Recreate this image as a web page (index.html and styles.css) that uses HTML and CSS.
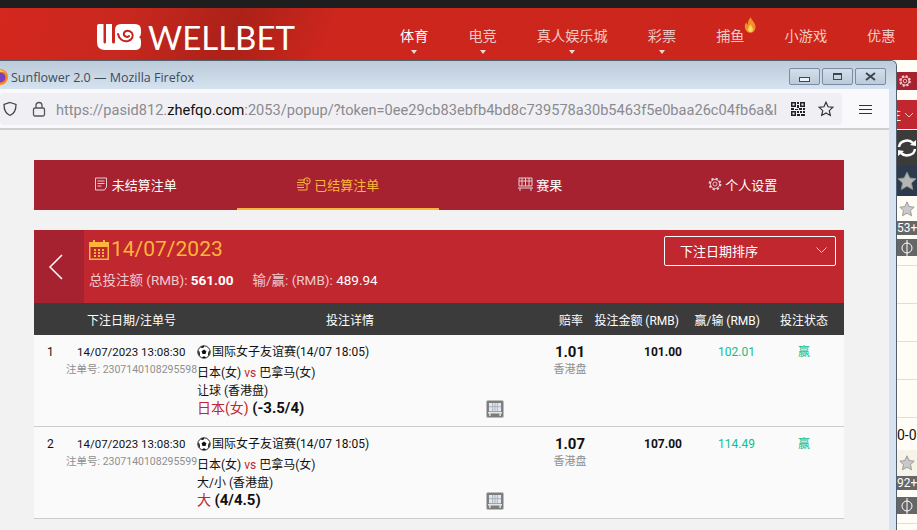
FILE: index.html
```html
<!DOCTYPE html>
<html lang="en">
<head>
    <meta charset="UTF-8">
    <title>Sunflower 2.0</title>
    <link rel="stylesheet" href="styles.css">
</head>
<body>
    <div class="top-strip"></div>
    <header class="site-header">
        <div class="logo">
            <svg class="logo-mark" width="44" height="26" viewBox="0 0 44 26">
                <path fill="#fff" d="M0 2q0-2 2-2h4.500v18q0 1.500 1.250 1.500T9 18V0h6v18q0 1.500 1.500 1.500T18 18V6q0-6 6-6h14q6 0 6 6v3q0 3-2 4 2 1 2 4v3q0 6-6 6H8q-8 0-8-8z"/>
                <path fill="none" stroke="#c4261f" stroke-width="2" stroke-linecap="round" d="M21 10c1 5 5 8 10 7 4-1 6-5 4-8-2-3-7-3-8 0-1 3 3 5 5 3"/>
            </svg>
            <span class="logo-name">WELLBET</span>
        </div>
        <nav class="site-nav">
            <a class="nav-item nav-active nav-drop">体育</a>
            <a class="nav-item nav-drop">电竞</a>
            <a class="nav-item nav-drop">真人娱乐城</a>
            <a class="nav-item nav-drop">彩票</a>
            <a class="nav-item">捕鱼
                <svg class="flame" width="13" height="18" viewBox="0 0 16 19">
                    <path fill="#f0902a" d="M8 0c1 3 5 6 6 10 1 5-2 9-6 9s-7-3-7-8c0-2 1-4 2-5 0 2 1 3 2 3C4 6 6 3 8 0z"/>
                    <path fill="#fbd45e" d="M8 8c0 2 3 4 3 7 0 2-1 3-3 3s-3-1-3-3c0-3 3-4 3-7z"/>
                </svg>
            </a>
            <a class="nav-item">小游戏</a>
            <a class="nav-item">优惠</a>
        </nav>
    </header>

    <aside class="side-strip">
        <div class="side-gear">
            <svg width="14" height="14" viewBox="0 0 24 24"><circle cx="12" cy="12" r="8" fill="none" stroke="#f6c9cd" stroke-width="4" stroke-dasharray="3.500 2.800"/><circle cx="12" cy="12" r="7" fill="none" stroke="#f6c9cd" stroke-width="1.500"/><circle cx="12" cy="12" r="3" fill="none" stroke="#f6c9cd" stroke-width="1.500"/></svg>
        </div>
        <div class="side-select"><span class="side-select-text">注</span><svg width="10" height="6" viewBox="0 0 10 6"><path d="M1 1l4 4 4-4" fill="none" stroke="#f3c6ca" stroke-width="1"/></svg></div>
        <div class="side-refresh">
            <svg width="20" height="20" viewBox="0 0 20 20"><path d="M2 9a8 7 0 0 1 14-4" fill="none" stroke="#fff" stroke-width="2.500"/><path d="M18 11a8 7 0 0 1-14 4" fill="none" stroke="#fff" stroke-width="2.500"/><path d="M13 7l6 1V2zM7 13l-6-1v6z" fill="#fff"/></svg>
        </div>
        <div class="side-fav"><svg width="20" height="20" viewBox="0 0 20 20"><path class="star-fill" d="M10 1l2.800 6 6.200.700-4.600 4.300 1.300 6.500L10 15.300 4.300 18.500 5.600 12 1 7.700 7.200 7z"/></svg></div>
        <div class="side-star"><svg width="16" height="16" viewBox="0 0 20 20"><path class="star-line" d="M10 1l2.800 6 6.200.700-4.600 4.300 1.300 6.500L10 15.300 4.300 18.500 5.600 12 1 7.700 7.200 7z"/></svg></div>
        <div class="side-min">53+</div>
        <div class="side-pitch"><svg width="12" height="16" viewBox="0 0 12 16"><circle cx="6" cy="8" r="5" fill="none" stroke="#fff"/><path d="M6 0v16" stroke="#fff"/></svg></div>
        <div class="side-line side-line-first"></div>
        <div class="side-line"></div>
        <div class="side-line"></div>
        <div class="side-line"></div>
        <div class="side-line"></div>
        <div class="side-score">0-0</div>
        <div class="side-star side-star-low"><svg width="16" height="16" viewBox="0 0 20 20"><path class="star-line" d="M10 1l2.800 6 6.200.700-4.600 4.300 1.300 6.500L10 15.300 4.300 18.500 5.600 12 1 7.700 7.200 7z"/></svg></div>
        <div class="side-min">92+</div>
        <div class="side-pitch side-pitch-low"><svg width="12" height="16" viewBox="0 0 12 16"><circle cx="6" cy="8" r="5" fill="none" stroke="#fff"/><path d="M6 0v16" stroke="#fff"/></svg></div>
        <div class="side-line side-line-first"></div>
    </aside>

    <div class="popup">
        <div class="title-bar">
            <svg class="ff-icon" width="16" height="16" viewBox="0 0 16 16"><circle cx="8" cy="8" r="8" fill="#f78a1e"/><circle cx="8.500" cy="8.500" r="5" fill="#7b3fc4"/><path d="M3 2q5-3 10 1-5-1-6 1-3 1-4-2z" fill="#ffcb3c"/></svg>
            <span class="title-text">Sunflower 2.0 — Mozilla Firefox</span>
            <div class="win-buttons">
                <span class="win-btn"><i class="win-min"></i></span>
                <span class="win-btn"><i class="win-max"></i></span>
                <span class="win-btn">
                    <svg width="11" height="9" viewBox="0 0 11 9"><path d="M1 1l9 7M10 1l-9 7" stroke="#3c4654" stroke-width="2" fill="none"/></svg>
                </span>
            </div>
        </div>
        <div class="tool-bar">
            <div class="url-bar">
                <svg class="url-icon" width="16" height="16" viewBox="0 0 16 16"><path d="M8 1.500l6 2c0 5-1 9-6 11-5-2-6-6-6-11z" fill="none" stroke="#444" stroke-width="1.300"/></svg>
                <svg class="url-lock" width="14" height="16" viewBox="0 0 14 16"><rect x="1.500" y="7" width="11" height="8" rx="1.500" fill="none" stroke="#555" stroke-width="1.300"/><path d="M4 7V4.500a3 3 0 0 1 6 0V7" fill="none" stroke="#555" stroke-width="1.300"/></svg>
                <div class="url-text">https://pasid812.<b>zhefqo.com</b>:2053/popup/?token=0ee29cb83ebfb4bd8c739578a30b5463f5e0baa26c04fb6a&amp;l</div>
                <svg class="url-qr" width="14" height="16" viewBox="0 0 14 16"><path fill="#222" d="M0 1h5v5H0zM9 1h5v5H9zM0 10h5v5H0zM1.500 2.500v2h2v-2zM10.500 2.500v2h2v-2zM1.500 11.500v2h2v-2zM6 1h2v2H6zM6 4h2v3H6zM0 7h3v2H0zM4 8h3v1H4zM8 7h3v2H8zM12 7h2v2h-2zM6 10h2v2H6zM9 10h2v2H9zM12 10h2v2h-2zM6 13h3v2H6zM10 13h4v2h-4z"/></svg>
                <svg class="url-star" width="16" height="16" viewBox="0 0 20 20"><path d="M10 1.500l2.600 5.700 6 .7-4.500 4.100 1.300 6L10 15l-5.400 3 1.300-6L1.400 7.900l6-.7z" fill="none" stroke="#333" stroke-width="1.500"/></svg>
            </div>
            <div class="menu-btn"><i></i><i></i><i></i></div>
        </div>

        <main class="content">
            <div class="tabs">
                <a class="tab">
                    <svg width="15" height="14" viewBox="0 0 15 14"><path d="M1.500 1h11v9l-2 3h-9zM3.500 4h7M3.500 6.500h7M3.500 9h4" fill="none" stroke="#e8ccd0"/></svg>
                    未结算注单
                </a>
                <a class="tab tab-active">
                    <svg width="15" height="14" viewBox="0 0 15 14"><path d="M2 3h7M1 5.500h7M1 8h7M1 10.500h7M2 13h9V6" fill="none" stroke="#fdb53b"/><circle cx="11" cy="4" r="3.200" fill="none" stroke="#fdb53b"/><path d="M11 2.500V4h1.500" fill="none" stroke="#fdb53b"/></svg>
                    已结算注单
                </a>
                <a class="tab">
                    <svg width="15" height="14" viewBox="0 0 15 14"><path d="M1 1h13v8H1zM4 1v8M7.500 1v8M11 1v8M1 4h13M0 11h15M2 11v3M13 11v3" fill="none" stroke="#e8ccd0"/></svg>
                    赛果
                </a>
                <a class="tab">
                    <svg width="14" height="14" viewBox="0 0 24 24"><circle cx="12" cy="12" r="9" fill="none" stroke="#e8ccd0" stroke-width="4" stroke-dasharray="3.500 3.570"/><circle cx="12" cy="12" r="8" fill="none" stroke="#e8ccd0" stroke-width="1.500"/><circle cx="12" cy="12" r="3.500" fill="none" stroke="#e8ccd0" stroke-width="1.500"/></svg>
                    个人设置
                </a>
            </div>

            <section class="date-head">
                <a class="date-back">
                    <svg width="16" height="26" viewBox="0 0 16 26"><path d="M14 1L2 13l12 12" fill="none" stroke="#fff" stroke-width="1.500"/></svg>
                </a>
                <div class="date-info">
                    <div class="date-title">
                        <svg width="20" height="21" viewBox="0 0 20 21"><path fill="#fdb53b" d="M0 3h4V1h2v2h8V1h2v2h4v18H0zM1.500 8v11.500h17V8zM5 10h2v2H5zM9 10h2v2H9zM13 10h2v2h-2zM5 13h2v2H5zM9 13h2v2H9zM13 13h2v2h-2zM5 16h2v2H5zM9 16h2v2H9zM13 16h2v2h-2z" fill-rule="evenodd"/></svg>
                        14/07/2023
                    </div>
                    <div class="date-totals">
                        <span>总投注额 (RMB): <b>561.00</b></span>
                        <span>输/赢: (RMB): <em>489.94</em></span>
                    </div>
                </div>
                <div class="sort-box">下注日期排序
                    <svg width="11" height="6" viewBox="0 0 11 6"><path d="M.5.500l5 5 5-5" fill="none" stroke="#f3c6ca"/></svg>
                </div>
            </section>

            <div class="table-head">
                <span></span>
                <span>下注日期/注单号</span>
                <span class="head-center">投注详情</span>
                <div class="head-right">
                    <span class="head-odds">赔率</span>
                    <span class="head-stake">投注金额 (RMB)</span>
                    <span class="head-win">赢/输 (RMB)</span>
                    <span class="head-status">投注状态</span>
                </div>
            </div>

            <div class="bet-row">
                <div class="bet-num">1</div>
                <div class="bet-date">
                    <div class="bet-time">14/07/2023 13:08:30</div>
                    <div class="bet-ref">注单号: 2307140108295598</div>
                </div>
                <div class="bet-detail">
                    <div class="detail-text">
                        <div class="league">
                            <svg width="14" height="14" viewBox="0 0 14 14"><circle cx="7" cy="7" r="6.200" fill="#fff" stroke="#222"/><path d="M7 4.500l2.400 1.700-.9 2.800h-3l-.9-2.800zM7 .8v1.500l-2 1-1.500-1.500zM1 6l1.500.500.500 3L2 11zM13 6l-1.500.500-.500 3L12 11zM5 13l1-1.500h2l1 1.500z" fill="#111"/></svg>
                            国际女子友谊赛(14/07 18:05)
                        </div>
                        <div class="teams">日本(女) <span class="vs">vs</span> 巴拿马(女)</div>
                        <div class="market">让球 (香港盘)</div>
                        <div class="pick"><span>日本(女)</span> <b>(-3.5/4)</b></div>
                    </div>
                    <span class="stream-btn"><svg width="14" height="13" viewBox="0 0 15 14"><path d="M1 0h13v9H1z" fill="#e4e8ee"/><path d="M5 0v9M7.500 0v9M10 0v9M1 4h13" fill="none" stroke="#a8aeb6"/><path d="M0 10.500h15M2 10v4M13 10v4" fill="none" stroke="#e6e6e6" stroke-width="1.500"/></svg></span>
                </div>
                <div class="bet-odds"><b>1.01</b><span>香港盘</span></div>
                <div class="bet-stake">101.00</div>
                <div class="bet-win">102.01</div>
                <div class="bet-status">赢</div>
            </div>

            <div class="bet-row">
                <div class="bet-num">2</div>
                <div class="bet-date">
                    <div class="bet-time">14/07/2023 13:08:30</div>
                    <div class="bet-ref">注单号: 2307140108295599</div>
                </div>
                <div class="bet-detail">
                    <div class="detail-text">
                        <div class="league">
                            <svg width="14" height="14" viewBox="0 0 14 14"><circle cx="7" cy="7" r="6.200" fill="#fff" stroke="#222"/><path d="M7 4.500l2.400 1.700-.9 2.800h-3l-.9-2.800zM7 .8v1.500l-2 1-1.500-1.500zM1 6l1.500.500.500 3L2 11zM13 6l-1.500.500-.500 3L12 11zM5 13l1-1.500h2l1 1.500z" fill="#111"/></svg>
                            国际女子友谊赛(14/07 18:05)
                        </div>
                        <div class="teams">日本(女) <span class="vs">vs</span> 巴拿马(女)</div>
                        <div class="market">大/小 (香港盘)</div>
                        <div class="pick"><span>大</span> <b>(4/4.5)</b></div>
                    </div>
                    <span class="stream-btn"><svg width="14" height="13" viewBox="0 0 15 14"><path d="M1 0h13v9H1z" fill="#e4e8ee"/><path d="M5 0v9M7.500 0v9M10 0v9M1 4h13" fill="none" stroke="#a8aeb6"/><path d="M0 10.500h15M2 10v4M13 10v4" fill="none" stroke="#e6e6e6" stroke-width="1.500"/></svg></span>
                </div>
                <div class="bet-odds"><b>1.07</b><span>香港盘</span></div>
                <div class="bet-stake">107.00</div>
                <div class="bet-win">114.49</div>
                <div class="bet-status">赢</div>
            </div>
        </main>
    </div>
</body>
</html>
```

FILE: styles.css
```css
* {
    box-sizing: border-box;
}
html, body {
    margin: 0;
    height: 530px;
    overflow: hidden;
}
body {
    font-family: Roboto, "Noto Sans CJK SC", sans-serif;
    font-size: 12px;
    background-color: #f2f2f2;
    color: #111;
    position: relative;
}
a {
    text-decoration: none;
    color: inherit;
}

/* page behind the popup */
.top-strip {
    height: 8px;
    background-color: #1e1e1e;
}
.site-header {
    height: 52px;
    display: flex;
    align-items: flex-start;
    background: linear-gradient(110deg, #d4261d 0%, #c8281f 14%, #ab2118 26%, #cc261d 36%, #cd251c 100%);
}
.logo {
    display: flex;
    flex: none;
    align-items: center;
    gap: 7px;
    margin: 16px 0 0 97px;
    width: 303px;
}
.logo-name {
    font-family: "Lato", sans-serif;
    font-size: 33px;
    line-height: 26px;
    color: #fff;
}
.site-nav {
    display: flex;
    flex: none;
}
.nav-item {
    position: relative;
    font-size: 14.200px;
    line-height: 20px;
    color: #f0c9c7;
    padding-top: 18px;
    margin-right: 40px;
    white-space: nowrap;
}
.nav-item:last-child {
    margin-right: 0;
}
.nav-active {
    color: #fff;
}
.nav-drop::after {
    content: "";
    position: absolute;
    left: 50%;
    top: 42px;
    margin-left: -3px;
    border: 3px solid transparent;
    border-top: 4px solid #f0d8d6;
    border-bottom: 0;
}
.flame {
    position: absolute;
    right: -12px;
    top: 8px;
}

/* strip of the page that shows right of the popup */
.side-strip {
    position: absolute;
    left: 897px;
    top: 60px;
    width: 20px;
    height: 470px;
    display: flex;
    flex-direction: column;
    background-color: #fffdf6;
    overflow: hidden;
}
.side-gear {
    height: 18px;
    margin-top: 12px;
    background-color: #a62230;
    display: flex;
    align-items: center;
    padding-left: 1px;
}
.side-select {
    height: 29px;
    margin-top: 10px;
    background-color: #c1272f;
    display: flex;
    align-items: center;
    gap: 3px;
    color: #fff;
    overflow: hidden;
}
.side-select-text {
    width: 4px;
    overflow: hidden;
    direction: rtl;
    flex: none;
}
.side-refresh {
    height: 36px;
    margin-top: 1px;
    background-color: #3b3b3b;
    display: flex;
    align-items: center;
    justify-content: center;
}
.side-fav {
    height: 30px;
    background-color: #2c3a4d;
    display: flex;
    align-items: center;
    justify-content: center;
}
.star-fill {
    fill: #b5b5b5;
    stroke: #8d8d8d;
}
.star-line {
    fill: #c9c9c9;
    stroke: #8d8d8d;
}
.side-star {
    height: 25px;
    flex: none;
    display: flex;
    align-items: center;
    justify-content: center;
}
.side-star-low {
    height: 26px;
    margin-top: 4px;
    background-color: #f6f3e8;
}
.side-min {
    height: 14px;
    flex: none;
    background-color: #666;
    color: #fff;
    font-size: 12px;
    line-height: 14px;
    white-space: nowrap;
}
.side-pitch {
    height: 17px;
    flex: none;
    margin-top: 4px;
    margin-bottom: 9px;
    background-color: #666;
    display: flex;
    align-items: center;
    justify-content: center;
}
.side-pitch-low {
    margin-top: 7px;
}
.side-line {
    height: 38px;
    border-bottom: 1px solid #eed8d6;
    flex: none;
}
.side-line-first {
    height: 1px;
}
.side-score {
    height: 24px;
    flex: none;
    margin-top: 4px;
    font-size: 14px;
    line-height: 26px;
    color: #111;
}

/* firefox popup window */
.popup {
    position: absolute;
    left: -8px;
    top: 60px;
    width: 905px;
    height: 470px;
    border-top: 1px solid #555f6c;
    border-right: 1px solid #555f6c;
    border-top-right-radius: 6px;
    background-color: #d6e4f2;
    padding-right: 7px;
    overflow: hidden;
}
.title-bar {
    height: 28px;
    margin-right: -7px;
    display: flex;
    align-items: center;
    padding: 4px 10px 0 0;
    background: linear-gradient(#bccbda, #d5e2ef);
}
.title-text {
    font-family: "Open Sans", sans-serif;
    font-size: 12.500px;
    color: #3d4b5c;
    margin-left: 3px;
}
.win-buttons {
    margin-left: auto;
    display: flex;
    gap: 2px;
    padding-bottom: 1px;
}
.win-btn {
    width: 31px;
    height: 17px;
    border: 1px solid #7b8ba3;
    border-radius: 2px;
    background: linear-gradient(#d3dee9, #bccadb);
    display: flex;
    align-items: center;
    justify-content: center;
}
.win-min {
    width: 11px;
    height: 5px;
    margin-top: 5px;
    border: 1px solid #3c4654;
    background-color: #eef2f6;
}
.win-max {
    width: 9px;
    height: 7px;
    border: 1px solid #3c4654;
    border-top-width: 2px;
}
.tool-bar {
    height: 41px;
    padding: 4px 0 3px 8px;
    display: flex;
    background-color: #f9f9fb;
    border-bottom: 2px solid #cfcfd2;
}
.url-bar {
    width: 842px;
    height: 32px;
    border-radius: 4px;
    background-color: #f0f0f4;
    display: flex;
    align-items: center;
    flex: none;
}
.url-icon {
    flex: none;
    margin-left: 2px;
}
.url-lock {
    flex: none;
    margin-left: 14px;
}
.url-text {
    flex: none;
    width: 730px;
    margin-left: 10px;
    padding-top: 1px;
    font-size: 14.600px;
    color: #8a8a8e;
    white-space: nowrap;
    overflow: hidden;
}
.url-text b {
    font-weight: normal;
    color: #111;
}
.url-qr {
    flex: none;
    margin-left: 5px;
}
.url-star {
    flex: none;
    margin-left: 13px;
}
.menu-btn {
    margin: 0 0 0 17px;
    width: 13px;
    display: flex;
    flex-direction: column;
    justify-content: center;
    gap: 3px;
}
.menu-btn i {
    height: 1px;
    background-color: #333;
    display: block;
}

.content {
    height: 400px;
    background-color: #f2f2f2;
    padding: 30px 0 0 42px;
}
.tabs {
    width: 810px;
    height: 50px;
    display: flex;
    background-color: #a62230;
}
.tab {
    flex: 1;
    display: flex;
    align-items: center;
    justify-content: center;
    gap: 3px;
    color: #fff;
    font-size: 13px;
    border-bottom: 2px solid transparent;
}
.tab-active {
    color: #fdb53b;
    border-bottom-color: #fdb53b;
}
.date-head {
    width: 810px;
    height: 73px;
    margin-top: 20px;
    display: flex;
    background-color: #c1272f;
}
.date-back {
    width: 50px;
    flex: none;
    background-color: #a62230;
    display: flex;
    align-items: center;
    justify-content: center;
    padding-right: 6px;
}
.date-info {
    padding: 6px 0 0 5px;
    flex: 1;
}
.date-title {
    display: flex;
    align-items: center;
    gap: 2px;
    font-size: 21px;
    line-height: 26px;
    color: #fdb53b;
}
.date-totals {
    display: flex;
    gap: 19px;
    margin-top: 9px;
    font-size: 13.500px;
    line-height: 18px;
    color: #f0c9cc;
}
.date-totals b {
    color: #fff;
}
.date-totals em {
    font-style: normal;
    color: #fff;
}
.sort-box {
    width: 172px;
    height: 30px;
    margin: 6px 8px 0 0;
    padding: 0 8px 2px 15px;
    border: 1px solid #fff;
    border-radius: 2px;
    display: flex;
    align-items: center;
    justify-content: space-between;
    color: #fff;
    font-size: 13px;
}
.table-head {
    width: 810px;
    height: 32px;
    display: grid;
    grid-template-columns: 53px 110px 306px 1fr;
    align-items: center;
    background-color: #3b3b3b;
    color: #fff;
    white-space: nowrap;
}
.head-center {
    text-align: center;
}
.head-right {
    display: flex;
    justify-content: flex-end;
    padding-right: 16px;
    text-align: right;
}
.head-odds {
    width: 25px;
}
.head-stake {
    width: 96px;
}
.head-win {
    width: 81px;
}
.head-status {
    width: 68px;
}
.bet-row {
    width: 810px;
    height: 92px;
    display: grid;
    grid-template-columns: 32px 131px 348px 50px 87px 82px 80px;
    background-color: #fafafa;
    border-bottom: 1px solid #ccc;
    padding-top: 8px;
}
.bet-num {
    padding-left: 13px;
    line-height: 18px;
}
.bet-time {
    font-size: 11.500px;
    line-height: 18px;
    margin-left: 11px;
    white-space: nowrap;
}
.bet-ref {
    font-size: 10.500px;
    line-height: 18px;
    color: #8f8f8f;
    white-space: nowrap;
}
.bet-detail {
    display: flex;
    justify-content: space-between;
    padding-right: 41px;
}
.league {
    display: flex;
    align-items: center;
    gap: 1px;
    line-height: 18px;
    white-space: nowrap;
}
.teams {
    margin-top: 3px;
    line-height: 18px;
}
.vs {
    color: #c1272f;
}
.market {
    margin-top: 1px;
    line-height: 17px;
}
.pick {
    font-size: 14px;
    line-height: 16px;
}
.pick span {
    color: #c1272f;
}
.pick b {
    font-size: 15px;
}
.stream-btn {
    width: 18px;
    height: 18px;
    margin-top: 57px;
    border-radius: 2px;
    background-color: #7d7d7d;
    border: 1px solid #bdbdbd;
    display: flex;
    align-items: center;
    justify-content: center;
}
.bet-odds {
    display: flex;
    flex-direction: column;
    align-items: center;
}
.bet-odds b {
    font-size: 15px;
    line-height: 18px;
}
.bet-odds span {
    font-size: 11px;
    line-height: 18px;
    color: #8f8f8f;
}
.bet-stake {
    text-align: right;
    font-weight: bold;
    line-height: 18px;
}
.bet-win {
    padding-left: 36px;
    line-height: 18px;
    color: #12bd8f;
}
.bet-status {
    text-align: center;
    line-height: 18px;
    color: #12bd8f;
}
```
